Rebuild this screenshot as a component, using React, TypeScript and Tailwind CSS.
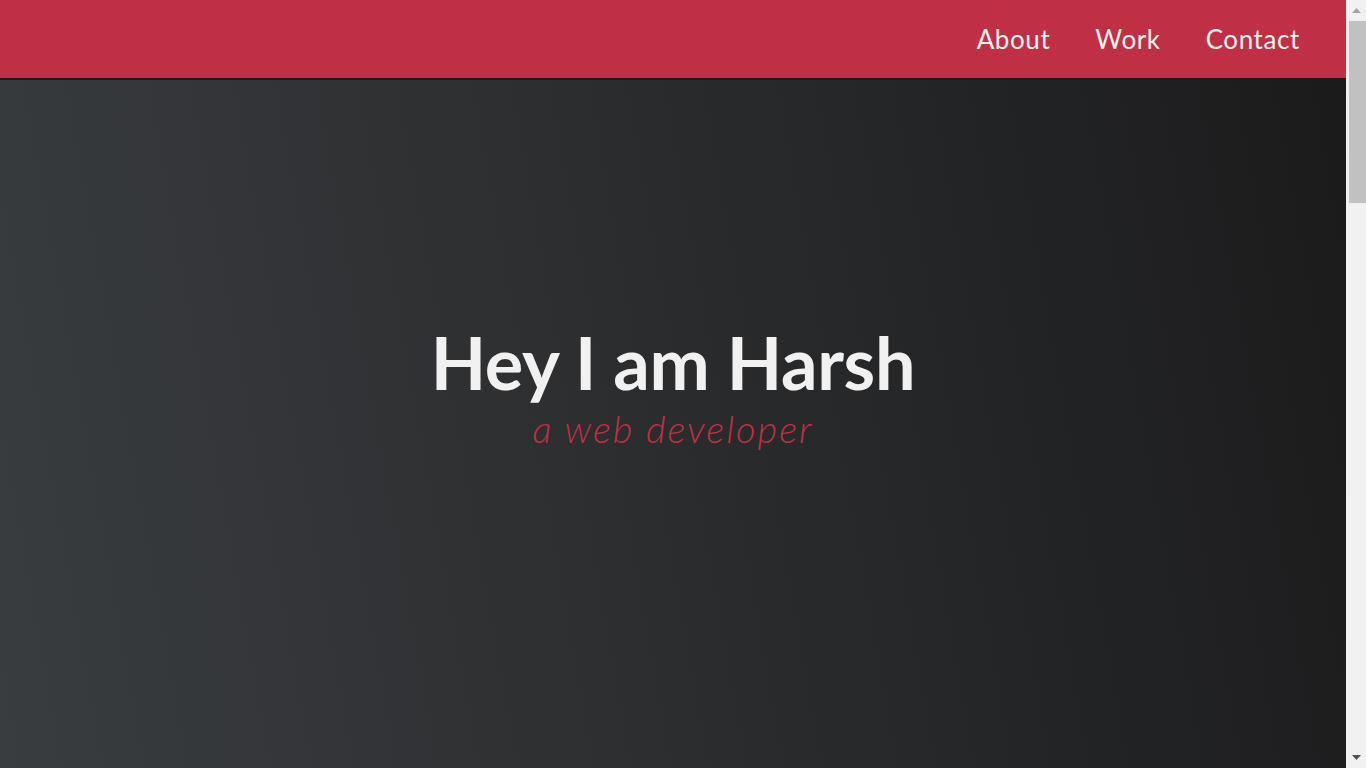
const links = ["About", "Work", "Contact"];

const NavBar = () => {
  return (
    <nav className="h-[80px] bg-[#bf3045] border-b-2 border-[#1b1b1d] flex items-center justify-end pr-[46px]">
      <ul className="flex items-center gap-[45px]">
        {links.map((link) => (
          <li key={link}>
            <a
              href={`#${link.toLowerCase()}`}
              className="text-[#f1f1f1] text-[26px] font-['Lato',sans-serif] tracking-[0.6px]"
            >
              {link}
            </a>
          </li>
        ))}
      </ul>
    </nav>
  );
};

const Hero = () => {
  return (
    <section className="h-[768px] bg-[linear-gradient(80deg,#3a3d40_0%,#1b1b1c_100%)] pt-[242px] flex flex-col items-center">
      <h1 className="text-[#f1f1f1] text-[72px] leading-[80px] font-bold font-['Lato',sans-serif] tracking-[-0.3px]">
        Hey I am Harsh
      </h1>
      <p className="mt-[4px] text-[#bf3045] text-[38px] leading-[44px] italic font-light font-['Lato',sans-serif] tracking-[2px]">
        a web developer
      </p>
    </section>
  );
};

// the browser's scroll bar, as it shows in the screenshot
const ScrollBar = () => {
  return (
    <aside className="w-[20px] h-screen bg-[#f1f1f1] flex flex-col items-center">
      <div className="h-[21px] flex items-center justify-center">
        <svg width="9" height="5" viewBox="0 0 9 5">
          <polygon points="0,5 4.5,0 9,5" fill="#a3a3a3" />
        </svg>
      </div>
      <div className="w-[17px] h-[182px] ml-[2px] bg-[#c1c1c1]" />
      <div className="flex-1" />
      <div className="h-[21px] flex items-center justify-center">
        <svg width="9" height="5" viewBox="0 0 9 5">
          <polygon points="0,0 9,0 4.5,5" fill="#505050" />
        </svg>
      </div>
    </aside>
  );
};

export default function App() {
  return (
    <div className="h-screen flex overflow-hidden">
      <main className="flex-1 h-screen overflow-y-auto bg-[#1b1b1c] [scrollbar-width:none]">
        <NavBar />
        <Hero />
        <div id="work" className="h-[2250px] bg-[#1b1b1c]" />
      </main>
      <ScrollBar />
    </div>
  );
}
